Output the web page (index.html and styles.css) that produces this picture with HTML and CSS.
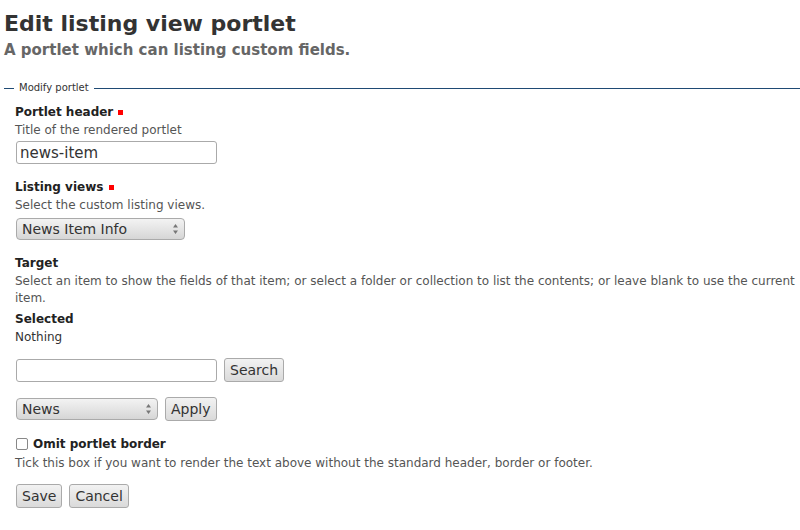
FILE: index.html
```html
<!DOCTYPE html>
<html>
<head>
<meta charset="utf-8">
<link rel="stylesheet" href="styles.css">
</head>
<body>
<div class="page">
  <h1 class="title">Edit listing view portlet</h1>
  <p class="subtitle">A portlet which can listing custom fields.</p>
  <form class="form">
    <fieldset class="fs">
      <legend class="legend">Modify portlet</legend>

      <div class="field first">
        <div class="label">Portlet header <span class="req"></span></div>
        <div class="help">Title of the rendered portlet</div>
        <input class="text" type="text" value="news-item">
      </div>

      <div class="field">
        <div class="label">Listing views <span class="req"></span></div>
        <div class="help">Select the custom listing views.</div>
        <div class="select sel-views"><span>News Item Info</span><svg class="arrows" width="7" height="12" viewBox="0 0 7 12"><path d="M3.5 1 L6 4.5 H1 Z M3.5 11 L6 7.5 H1 Z" fill="#777"/></svg></div>
      </div>

      <div class="field target">
        <div class="label">Target</div>
        <div class="help multi">Select an item to show the fields of that item; or select a folder or collection to list the contents; or leave blank to use the current item.</div>
        <div class="label sel-label">Selected</div>
        <div class="plain">Nothing</div>
        <div class="row search-row">
          <input class="text small" type="text">
          <button class="btn" type="button">Search</button>
        </div>
        <div class="row apply-row">
          <div class="select sel-news"><span>News</span><svg class="arrows" width="7" height="12" viewBox="0 0 7 12"><path d="M3.5 1 L6 4.5 H1 Z M3.5 11 L6 7.5 H1 Z" fill="#777"/></svg></div>
          <button class="btn" type="button">Apply</button>
        </div>
      </div>

      <div class="field check">
        <div class="check-row"><span class="box"></span><span class="label">Omit portlet border</span></div>
        <div class="help tick">Tick this box if you want to render the text above without the standard header, border or footer.</div>
      </div>

      <div class="row actions">
        <button class="btn" type="button">Save</button>
        <button class="btn" type="button">Cancel</button>
      </div>
    </fieldset>
  </form>
</div>
</body>
</html>
```
FILE: styles.css
```css
html, body {
  margin: 0;
  padding: 0;
  background: #fff;
}
body {
  font-family: "DejaVu Sans", Verdana, sans-serif;
  font-size: 12px;
  color: #333;
}
.page {
  padding: 9px 0 0 4px;
}
.title {
  margin: 0;
  font-size: 22px;
  line-height: 30px;
  font-weight: bold;
  color: #333;
}
.subtitle {
  margin: 0;
  font-size: 15px;
  line-height: 22px;
  font-weight: bold;
  color: #666;
}
.form {
  margin-top: 21px;
}
.fs {
  margin: 0;
  padding: 0 0 0 11px;
  border: 0;
  border-top: 1px solid #1f4a74;
  min-width: 0;
}
.legend {
  margin-left: -1px;
  padding: 0 5px;
  font-size: 10px;
  line-height: 12px;
  color: #333;
}
.field {
  margin-top: 14px;
}
.field.first {
  margin-top: 9px;
}
.label {
  font-weight: bold;
  line-height: 18px;
  color: #222;
}
.req {
  display: inline-block;
  width: 5px;
  height: 5px;
  background: #f00;
  margin-left: 1px;
  vertical-align: 1px;
}
.help {
  line-height: 18px;
  color: #555;
}
.help.multi {
  line-height: 17px;
  padding-top: 1px;
}
.plain {
  line-height: 18px;
  color: #333;
}
.text {
  display: block;
  box-sizing: border-box;
  width: 201px;
  height: 23px;
  margin: 2px 0 0 1px;
  padding: 0 3px;
  border: 1px solid #aaa;
  border-radius: 3px;
  font-family: "DejaVu Sans", sans-serif;
  font-size: 15px;
  color: #333;
  background: #fff;
}
.select {
  box-sizing: border-box;
  display: flex;
  align-items: center;
  justify-content: space-between;
  height: 22px;
  margin-left: 1px;
  padding: 0 5px 0 5px;
  border: 1px solid #aaa;
  border-radius: 4px;
  background: linear-gradient(#f3f3f3, #d6d6d6);
  font-size: 14px;
  color: #333;
}
.sel-views {
  width: 169px;
  margin-top: 4px;
}
.sel-news {
  width: 142px;
}
.arrows {
  flex: none;
}
.row {
  display: flex;
  align-items: center;
  gap: 7px;
}
.target {
  margin-top: 14px;
}
.help + .sel-label {
  margin-top: 3px;
}
.search-row {
  margin-top: 12px;
}
.search-row .text {
  margin-top: 0;
}
.apply-row {
  margin-top: 15px;
}
.btn {
  box-sizing: border-box;
  height: 24px;
  padding: 0 5px;
  border: 1px solid #aaa;
  border-radius: 3px;
  background: linear-gradient(#f2f2f2, #dadada);
  font-family: "DejaVu Sans", sans-serif;
  font-size: 14px;
  color: #333;
}
.check {
  margin-top: 14px;
}
.check-row {
  display: flex;
  align-items: center;
  gap: 5px;
}
.box {
  box-sizing: border-box;
  width: 12px;
  height: 12px;
  margin-left: 1px;
  border: 1px solid #888;
  border-radius: 2px;
  background: #fff;
}
.tick {
  margin-top: 1px;
}
.actions {
  margin-top: 12px;
  padding-left: 1px;
}
```
